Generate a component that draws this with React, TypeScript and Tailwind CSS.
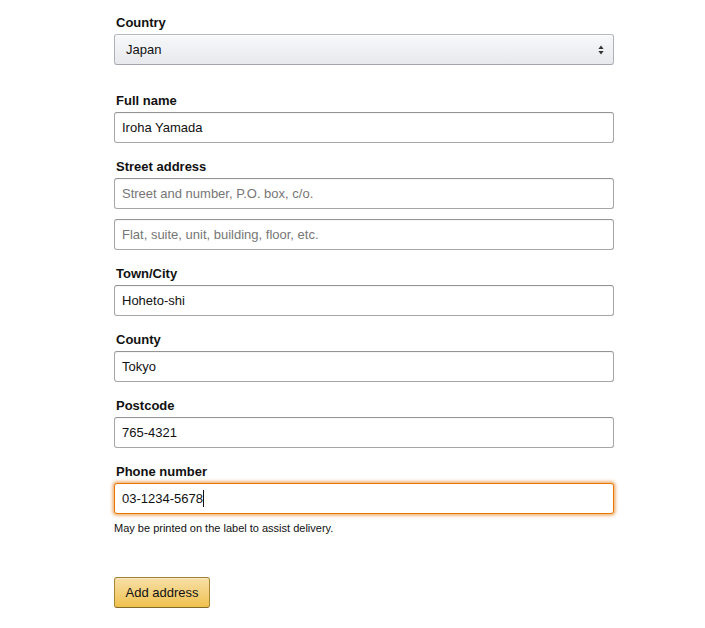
const inputCls =
  "block w-full h-[31px] px-[7px] rounded-[3px] border border-[#a6a6a6] border-t-[#949494] bg-white text-[13px] text-[#111] placeholder:text-[#767676] outline-none shadow-[inset_0_1px_0_rgba(255,255,255,0.5),0_1px_0_rgba(0,0,0,0.07)_inset]";

function Label({ children }: { children: React.ReactNode }) {
  return <label className="block text-[13px] font-bold leading-[19px] text-[#111] pl-[2px] mb-[2px]">{children}</label>;
}

function Field({ label, value, placeholder }: { label: string; value?: string; placeholder?: string }) {
  return (
    <div className="mb-[14px]">
      <Label>{label}</Label>
      <input className={inputCls} defaultValue={value} placeholder={placeholder} />
    </div>
  );
}

export default function App() {
  return (
    <div
      className="min-h-screen w-full bg-white text-[#111]"
      style={{ fontFamily: '"Liberation Sans", Arial, sans-serif' }}
    >
      <form className="w-[500px] ml-[114px] pt-[13px]" onSubmit={(e) => e.preventDefault()}>
        {/* Country */}
        <div className="mb-[26px]">
          <Label>Country</Label>
          <div className="relative h-[31px] rounded-[3px] border border-[#adb1b8] border-t-[#b5b8be] border-b-[#a2a6ac] bg-gradient-to-b from-[#f7f8fa] to-[#e7e9ec] shadow-[inset_0_1px_0_rgba(255,255,255,0.6)] flex items-center pl-[11px] text-[13px]">
            <span>Japan</span>
            <svg className="absolute right-[9px] top-[10px]" width="6" height="10" viewBox="0 0 6 10">
              <path d="M3 0.5 L5.6 4 H0.4 Z" fill="#333" />
              <path d="M3 9.5 L5.6 6 H0.4 Z" fill="#333" />
            </svg>
          </div>
        </div>

        <Field label="Full name" value="Iroha Yamada" />

        <div className="mb-[14px]">
          <Label>Street address</Label>
          <input className={inputCls + " mb-[10px]"} placeholder="Street and number, P.O. box, c/o." />
          <input className={inputCls} placeholder="Flat, suite, unit, building, floor, etc." />
        </div>

        <Field label="Town/City" value="Hoheto-shi" />
        <Field label="County" value="Tokyo" />
        <Field label="Postcode" value="765-4321" />

        <div>
          <Label>Phone number</Label>
          <div className="relative">
            <input
              className="block w-full h-[31px] px-[7px] rounded-[3px] border border-[#e77600] bg-white text-[13px] text-[#111] outline-none shadow-[0_0_3px_2px_rgba(228,121,17,0.5)]"
              defaultValue="03-1234-5678"
            />
            <span className="absolute left-[89px] top-[7px] h-[17px] w-px bg-[#111]" />
          </div>
          <p className="text-[11px] leading-[14px] text-[#111] pt-[7px]">May be printed on the label to assist delivery.</p>
        </div>

        <button
          type="submit"
          className="mt-[42px] h-[31px] w-[96px] rounded-[3px] border border-[#a88734] border-t-[#9c7e31] border-b-[#846a29] bg-gradient-to-b from-[#f7dfa5] to-[#f0c14b] text-[13px] text-[#111] shadow-[inset_0_1px_0_rgba(255,255,255,0.4)]"
        >
          Add address
        </button>
      </form>
    </div>
  );
}
